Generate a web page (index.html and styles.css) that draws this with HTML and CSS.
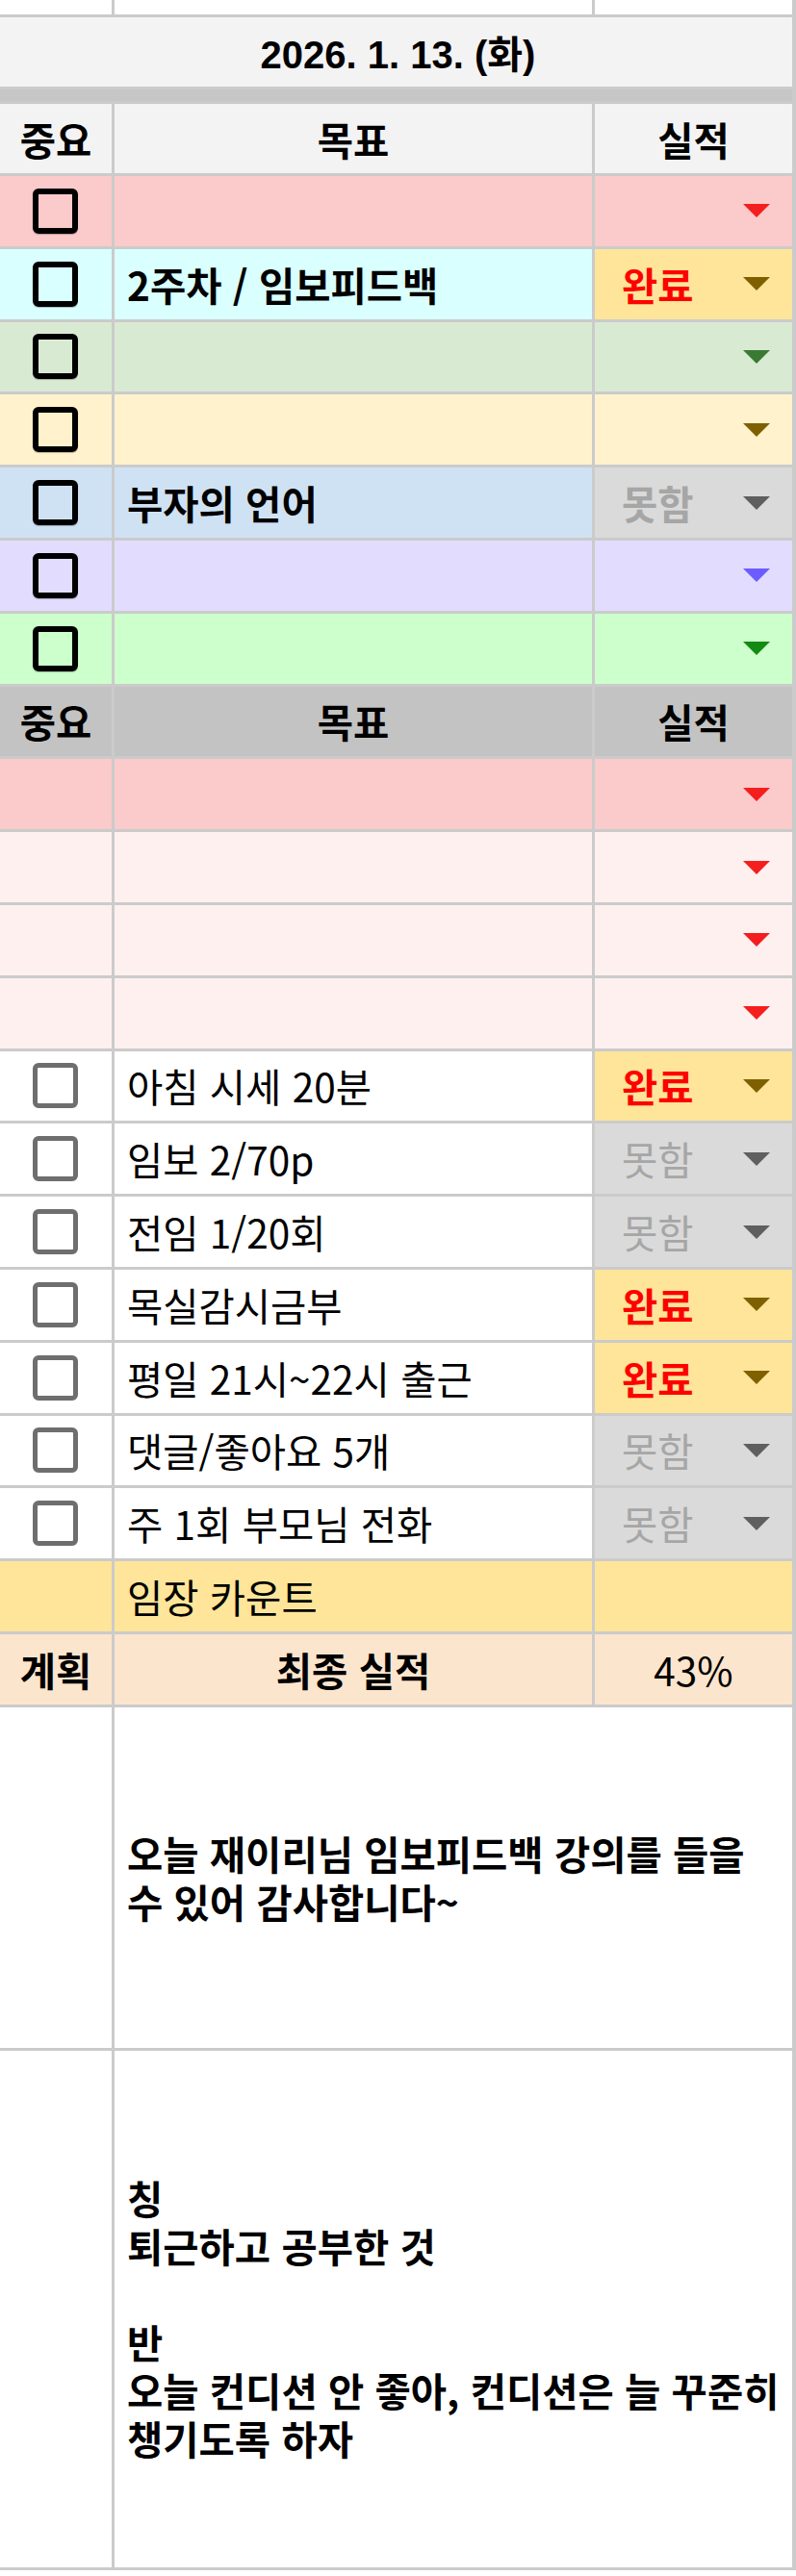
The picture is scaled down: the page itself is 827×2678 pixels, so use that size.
FILE: index.html
```html
<!DOCTYPE html>
<html lang="ko">
<head>
<meta charset="utf-8">
<title>2026. 1. 13. (화)</title>
<link rel="stylesheet" href="styles.css">
</head>
<body>
<div class="sheet">
  <div class="c sliver"></div><div class="c sliver"></div><div class="c sliver"></div>

  <div class="c date span3">2026. 1. 13. (화)</div>
  <div class="c band span3"></div>

  <div class="c head hd1">중요</div><div class="c head hd1 center">목표</div><div class="c head hd1 center">실적</div>

  <!-- top section -->
  <div class="c row bold bg-pink"><span class="box dark"></span></div>
  <div class="c row bold bg-pink txt"></div>
  <div class="c row bold bg-pink chip"><svg class="arr a-red" viewBox="0 0 28 14"><polygon points="0,0 28,0 14,14"/></svg></div>

  <div class="c row bold bg-cyan"><span class="box dark"></span></div>
  <div class="c row bold bg-cyan txt">2주차 / 임보피드백</div>
  <div class="c row bold bg-done chip"><span class="done">완료</span><svg class="arr a-gold" viewBox="0 0 28 14"><polygon points="0,0 28,0 14,14"/></svg></div>

  <div class="c row bold bg-green"><span class="box dark"></span></div>
  <div class="c row bold bg-green txt"></div>
  <div class="c row bold bg-green chip"><svg class="arr a-green" viewBox="0 0 28 14"><polygon points="0,0 28,0 14,14"/></svg></div>

  <div class="c row bold bg-yellow"><span class="box dark"></span></div>
  <div class="c row bold bg-yellow txt"></div>
  <div class="c row bold bg-yellow chip"><svg class="arr a-gold" viewBox="0 0 28 14"><polygon points="0,0 28,0 14,14"/></svg></div>

  <div class="c row bold bg-blue"><span class="box dark"></span></div>
  <div class="c row bold bg-blue txt">부자의 언어</div>
  <div class="c row bold bg-miss chip"><span class="miss">못함</span><svg class="arr a-gray" viewBox="0 0 28 14"><polygon points="0,0 28,0 14,14"/></svg></div>

  <div class="c row bold bg-lav"><span class="box dark"></span></div>
  <div class="c row bold bg-lav txt"></div>
  <div class="c row bold bg-lav chip"><svg class="arr a-purple" viewBox="0 0 28 14"><polygon points="0,0 28,0 14,14"/></svg></div>

  <div class="c row bold bg-lime"><span class="box dark"></span></div>
  <div class="c row bold bg-lime txt"></div>
  <div class="c row bold bg-lime chip"><svg class="arr a-lime" viewBox="0 0 28 14"><polygon points="0,0 28,0 14,14"/></svg></div>

  <!-- second header -->
  <div class="c row head hd2">중요</div><div class="c row head hd2 center">목표</div><div class="c row head hd2 center">실적</div>

  <div class="c row bg-pink"></div><div class="c row bg-pink"></div>
  <div class="c row bg-pink chip"><svg class="arr a-red" viewBox="0 0 28 14"><polygon points="0,0 28,0 14,14"/></svg></div>

  <div class="c row bg-rose"></div><div class="c row bg-rose"></div>
  <div class="c row bg-rose chip"><svg class="arr a-red" viewBox="0 0 28 14"><polygon points="0,0 28,0 14,14"/></svg></div>
  <div class="c row bg-rose"></div><div class="c row bg-rose"></div>
  <div class="c row bg-rose chip"><svg class="arr a-red" viewBox="0 0 28 14"><polygon points="0,0 28,0 14,14"/></svg></div>
  <div class="c row bg-rose"></div><div class="c row bg-rose"></div>
  <div class="c row bg-rose chip"><svg class="arr a-red" viewBox="0 0 28 14"><polygon points="0,0 28,0 14,14"/></svg></div>

  <!-- habits -->
  <div class="c row"><span class="box light"></span></div>
  <div class="c row txt">아침 시세 20분</div>
  <div class="c row bg-done chip"><span class="done">완료</span><svg class="arr a-gold" viewBox="0 0 28 14"><polygon points="0,0 28,0 14,14"/></svg></div>

  <div class="c row"><span class="box light"></span></div>
  <div class="c row txt">임보 2/70p</div>
  <div class="c row bg-miss chip"><span class="miss">못함</span><svg class="arr a-gray" viewBox="0 0 28 14"><polygon points="0,0 28,0 14,14"/></svg></div>

  <div class="c row"><span class="box light"></span></div>
  <div class="c row txt">전임 1/20회</div>
  <div class="c row bg-miss chip"><span class="miss">못함</span><svg class="arr a-gray" viewBox="0 0 28 14"><polygon points="0,0 28,0 14,14"/></svg></div>

  <div class="c row"><span class="box light"></span></div>
  <div class="c row txt">목실감시금부</div>
  <div class="c row bg-done chip"><span class="done">완료</span><svg class="arr a-gold" viewBox="0 0 28 14"><polygon points="0,0 28,0 14,14"/></svg></div>

  <div class="c row"><span class="box light"></span></div>
  <div class="c row txt">평일 21시~22시 출근</div>
  <div class="c row bg-done chip"><span class="done">완료</span><svg class="arr a-gold" viewBox="0 0 28 14"><polygon points="0,0 28,0 14,14"/></svg></div>

  <div class="c row"><span class="box light"></span></div>
  <div class="c row txt">댓글/좋아요 5개</div>
  <div class="c row bg-miss chip"><span class="miss">못함</span><svg class="arr a-gray" viewBox="0 0 28 14"><polygon points="0,0 28,0 14,14"/></svg></div>

  <div class="c row"><span class="box light"></span></div>
  <div class="c row txt">주 1회 부모님 전화</div>
  <div class="c row bg-miss chip"><span class="miss">못함</span><svg class="arr a-gray" viewBox="0 0 28 14"><polygon points="0,0 28,0 14,14"/></svg></div>

  <div class="c row bg-done"></div>
  <div class="c row bg-done txt">임장 카운트</div>
  <div class="c row bg-done"></div>

  <div class="c row bg-peach bold">계획</div>
  <div class="c row bg-peach bold center">최종 실적</div>
  <div class="c row bg-peach center">43%</div>

  <!-- notes -->
  <div class="c note1"></div>
  <div class="c note1 span2 note">오늘 재이리님 임보피드백 강의를 들을<br>수 있어 감사합니다~</div>

  <div class="c note2"></div>
  <div class="c note2 span2 note shift">칭<br>퇴근하고 공부한 것<br><br>반<br>오늘 컨디션 안 좋아, 컨디션은 늘 꾸준히<br>챙기도록 하자</div>
</div>
</body>
</html>
```

FILE: styles.css
```css
html, body {
  margin: 0;
  padding: 0;
  background: #ffffff;
}

body {
  font-family: "Noto Sans CJK KR", "Liberation Sans", sans-serif;
  font-size: 40.5px;
  color: #000;
}

.sheet {
  width: 827px;
  box-sizing: border-box;
  display: grid;
  grid-template-columns: 116px 496px 205px;
  gap: 3px;
  padding: 0 4px 3px 0;
  background: #cbcbcb;
}

.c {
  background: #ffffff;
  display: flex;
  align-items: center;
  justify-content: center;
  min-width: 0;
  box-sizing: border-box;
  white-space: nowrap;
}

.span3 { grid-column: span 3; }
.span2 { grid-column: span 2; }

.sliver { height: 15px; }

.date {
  height: 72px;
  background: #f3f3f3;
  font-family: "Liberation Sans", "Noto Sans CJK KR", sans-serif;
  font-weight: bold;
  font-size: 40px;
  padding-left: 4px;
}

.band {
  height: 12px;
  background: #c6c6c6;
}

.head {
  height: 72px;
  font-weight: bold;
}
.hd1 { background: #f3f3f3; }
.hd2 { background: #c3c3c3; }

.row { height: 72.8px; }

.bold { font-weight: bold; }
.center { justify-content: center; }

.txt {
  justify-content: flex-start;
  padding-left: 13px;
}

.chip {
  justify-content: flex-start;
  padding: 0 23px 0 28px;
}

.arr {
  width: 28px;
  height: 14px;
  margin-left: auto;
  flex: none;
}
.arr polygon { fill: currentColor; }

.a-red { color: #f41e1e; }
.a-gold { color: #7f6000; }
.a-green { color: #3b7a33; }
.a-gray { color: #5f5f5f; }
.a-purple { color: #6c5cff; }
.a-lime { color: #138a13; }

.done {
  color: #ff0000;
  font-weight: bold;
}
.miss {
  color: #a6a6a6;
}

.bg-pink { background: #fbcaca; }
.bg-rose { background: #fff0f0; }
.bg-cyan { background: #d9ffff; }
.bg-green { background: #d9ead3; }
.bg-yellow { background: #fff2cc; }
.bg-blue { background: #cfe2f3; }
.bg-lav { background: #e2ddff; }
.bg-lime { background: #ccffcc; }
.bg-done { background: #ffe599; }
.bg-miss { background: #dadada; }
.bg-peach { background: #fce5cd; }

.box {
  display: block;
  box-sizing: border-box;
  width: 47px;
  height: 47px;
  border-radius: 6px;
  margin-right: 2px;
}
.box.dark {
  border: 6px solid #000000;
  box-shadow: 0 1px 1px rgba(0, 0, 0, 0.25);
}
.box.light {
  border: 5px solid #6e6e6e;
  background: #ffffff;
}

.note1 { height: 354px; }
.note2 { height: 537px; }

.note {
  justify-content: flex-start;
  padding-left: 13px;
  font-weight: bold;
  line-height: 50px;
  white-space: nowrap;
}
.note.shift { padding-top: 20px; }
```
